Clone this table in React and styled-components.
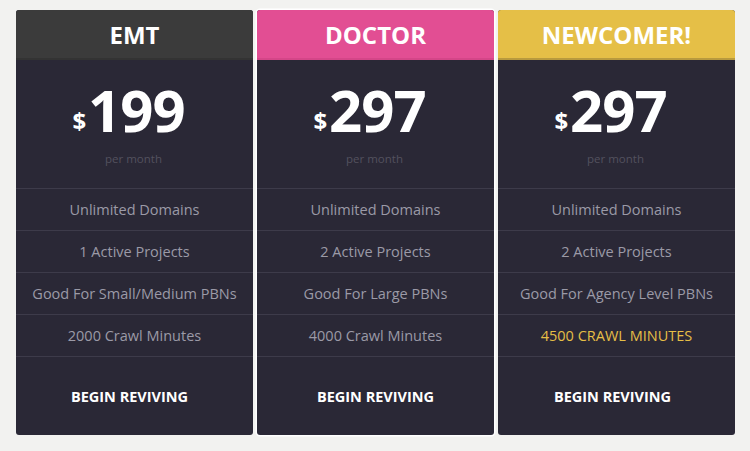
import styled, { createGlobalStyle } from 'styled-components'

const Global = createGlobalStyle`
  html, body {
    margin: 0;
    padding: 0;
    background: #f2f2f0;
    font-family: "Open Sans", "Liberation Sans", sans-serif;
  }
`

const plans = [
  {
    name: 'EMT',
    color: '#3b3b3b',
    edge: '#333333',
    price: '199',
    shift: 10,
    features: ['Unlimited Domains', '1 Active Projects', 'Good For Small/Medium PBNs', '2000 Crawl Minutes'],
  },
  {
    name: 'DOCTOR',
    color: '#e24e93',
    edge: '#d44688',
    price: '297',
    shift: 0,
    lifted: true,
    features: ['Unlimited Domains', '2 Active Projects', 'Good For Large PBNs', '4000 Crawl Minutes'],
  },
  {
    name: 'NEWCOMER!',
    color: '#e5bf47',
    edge: '#b89a3e',
    price: '297',
    shift: 8,
    features: ['Unlimited Domains', '2 Active Projects', 'Good For Agency Level PBNs', '4500 CRAWL MINUTES'],
    highlightLast: true,
  },
]

const Page = styled.div`
  display: flex;
  gap: 4px;
  padding: 10px 14px 15px 16px;
  width: 720px;
`

const Card = styled.div`
  flex: 0 0 237px;
  display: flex;
  flex-direction: column;
  background: #2a2836;
  border-radius: 3px;
  overflow: hidden;
  box-shadow: ${(p) => (p.$lifted ? '0 0 0 1.5px #ffffff' : 'none')};
`

const Header = styled.div`
  height: 48px;
  display: flex;
  align-items: center;
  justify-content: center;
  background: ${(p) => p.$color};
  border-bottom: 2px solid ${(p) => p.$edge};
  color: #fff;
  font-size: 24px;
  font-weight: 700;
`

const PriceBlock = styled.div`
  height: 129px;
  display: flex;
  flex-direction: column;
  align-items: center;
  padding: 21px 12px 0 0;
  box-sizing: border-box;
  border-bottom: 1px solid #3d3b4a;
`

const Price = styled.div`
  display: flex;
  align-items: flex-end;
  color: #fff;
  font-weight: 700;
  line-height: 1;
`

const Currency = styled.span`
  font-size: 24px;
  margin-right: 2px;
  margin-bottom: 6px;
`

const Amount = styled.span`
  font-size: 58px;
  letter-spacing: -1px;
`

const Per = styled.div`
  margin-top: 12px;
  padding-left: 10px;
  font-size: 11.5px;
  color: #53515e;
`

const Feature = styled.div`
  height: 41px;
  display: flex;
  align-items: center;
  justify-content: center;
  border-bottom: 1px solid #3d3b4a;
  font-size: 14.5px;
  color: ${(p) => (p.$hot ? '#e6bf46' : '#9b9aa7')};
`

const Action = styled.div`
  flex: 0 0 78px;
  display: flex;
  align-items: center;
  justify-content: center;
  padding-right: ${(p) => p.$shift}px;
  color: #fff;
  font-size: 14.5px;
  font-weight: 700;
`

export default function App() {
  return (
    <>
      <Global />
      <Page>
        {plans.map((plan) => (
          <Card key={plan.name} $lifted={plan.lifted}>
            <Header $color={plan.color} $edge={plan.edge}>{plan.name}</Header>
            <PriceBlock>
              <Price>
                <Currency>$</Currency>
                <Amount>{plan.price}</Amount>
              </Price>
              <Per>per month</Per>
            </PriceBlock>
            {plan.features.map((f, i) => (
              <Feature key={f} $hot={plan.highlightLast && i === plan.features.length - 1}>{f}</Feature>
            ))}
            <Action $shift={plan.shift}>BEGIN REVIVING</Action>
          </Card>
        ))}
      </Page>
    </>
  )
}
